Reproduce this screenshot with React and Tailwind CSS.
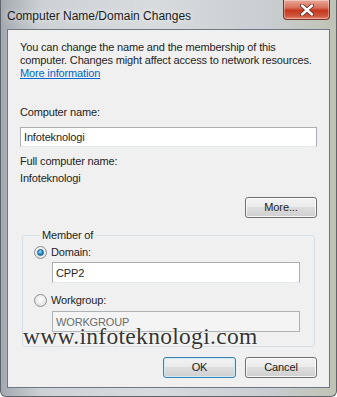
import { useState } from 'react'

const ui = { fontFamily: '"Liberation Sans", Arial, sans-serif' }

function WinButton({ label, primary = false, className = '' }) {
  return (
    <button
      className={`h-[21px] rounded-[3px] border text-[11px] tracking-[-0.1px] text-[#1a1a1a] ${primary
          ? 'border-[#3c7fb1] shadow-[inset_0_0_0_1px_#cdeaf8]'
          : 'border-[#707070] shadow-[inset_0_0_0_1px_rgba(255,255,255,0.8)]'
        } bg-[linear-gradient(180deg,#f2f2f2_0%,#ebebeb_45%,#dddddd_50%,#cfcfcf_100%)] ${className}`}
    >
      {label}
    </button>
  )
}

function Radio({ checked }) {
  return (
    <span className="w-[13px] h-[13px] rounded-full border border-[#8e8f8f] bg-[radial-gradient(circle_at_50%_40%,#ffffff,#d8d8d8)] flex items-center justify-center shrink-0">
      {checked && (
        <span className="w-[7px] h-[7px] rounded-full bg-[radial-gradient(circle_at_40%_35%,#9fe0ff,#1f8bc4_55%,#0f4f82)] border border-[#1b5a8a]" />
      )}
    </span>
  )
}

export default function App() {
  const [name, setName] = useState('Infoteknologi')
  const [member, setMember] = useState('domain')

  return (
    <div
      className="w-[337px] h-[397px] flex flex-col overflow-hidden border-x border-b border-[#5d646b] rounded-b-[6px] bg-[linear-gradient(90deg,#a3a9af_0%,#cdd1d5_12%,#d8dbde_45%,#c9cdd1_80%,#bfc3b4_100%)]"
      style={ui}
    >
      {/* Title bar */}
      <div className="h-[29px] flex items-start shrink-0">
        <span className="pl-[6px] pt-[7px] text-[12px] text-[#1c1c1c] [text-shadow:0_0_6px_rgba(255,255,255,0.9)]">
          Computer Name/Domain Changes
        </span>
        <div className="ml-auto mr-[6px] w-[47px] h-[20px] rounded-b-[4px] border border-t-0 border-[#7b3328] bg-[linear-gradient(180deg,#e9a999_0%,#d8715c_40%,#c5381f_55%,#d0563f_85%,#e28a70_100%)] flex items-center justify-center shadow-[inset_0_0_0_1px_rgba(255,255,255,0.35)]">
          <svg width="14" height="12" viewBox="0 0 14 12">
            <path d="M2 1.5 L12 10.5 M12 1.5 L2 10.5" stroke="#5a2a22" strokeWidth="4" strokeLinecap="round" />
            <path d="M2 1.5 L12 10.5 M12 1.5 L2 10.5" stroke="#ffffff" strokeWidth="2.4" strokeLinecap="round" />
          </svg>
        </div>
      </div>

      {/* Client area */}
      <div className="relative mx-[6px] flex-1 border border-[#6e7883] bg-[#f0f0f0] px-[12px] pt-[11px] text-[11px] tracking-[-0.15px] leading-[13px] text-[#1e1e1e]">
        <p>
          You can change the name and the membership of this computer. Changes might affect access to network resources.
        </p>
        <a href="#" className="text-[#0066cc] underline">More information</a>

        <div className="mt-[26px]">Computer name:</div>
        <input
          value={name}
          onChange={(e) => setName(e.target.value)}
          className="mt-[8px] w-full h-[20px] border border-[#abadb3] border-b-[#e3e9ef] bg-white px-[3px] text-[11px] outline-none"
          style={ui}
        />

        <div className="mt-[8px]">Full computer name:</div>
        <div className="mt-[4px]">Infoteknologi</div>

        <div className="mt-[12px] flex justify-end">
          <WinButton label="More..." className="w-[72px] h-[20px]" />
        </div>

        <fieldset className="mt-[11px] mx-[2px] border border-[#d5dfe5] rounded-[3px] pl-[11px] pr-[14px] pb-[14px] pt-[4px]">
          <legend className="ml-[6px] px-[2px]">Member of</legend>

          <label className="flex items-center gap-[4px]" onClick={() => setMember('domain')}>
            <Radio checked={member === 'domain'} />
            <span>Domain:</span>
          </label>
          <input
            defaultValue="CPP2"
            className="mt-[3px] ml-[18px] w-[calc(100%-18px)] h-[21px] border border-[#abadb3] border-b-[#e3e9ef] bg-white px-[3px] text-[11px] outline-none"
            style={ui}
          />

          <label className="mt-[11px] flex items-center gap-[4px]" onClick={() => setMember('workgroup')}>
            <Radio checked={member === 'workgroup'} />
            <span>Workgroup:</span>
          </label>
          <input
            defaultValue="WORKGROUP"
            disabled
            className="mt-[4px] ml-[18px] w-[calc(100%-18px)] h-[21px] border border-[#adb2b5] bg-[#f4f4f4] px-[3px] text-[11px] text-[#6d6d6d] outline-none"
            style={ui}
          />
        </fieldset>

        <div className="mt-[10px] flex justify-end gap-[9px]">
          <WinButton label="OK" primary className="w-[73px]" />
          <WinButton label="Cancel" className="w-[72px]" />
        </div>

        {/* Watermark */}
        <div
          className="absolute left-[15px] top-[295px] text-[23.5px] leading-none text-[#353535] tracking-[0.3px] [text-shadow:0_0_2px_#ffffff,0_0_2px_#ffffff]"
          style={{ fontFamily: '"Liberation Serif", "Times New Roman", serif' }}
        >
          www.infoteknologi.com
        </div>
      </div>
      <div className="h-[8px] shrink-0" />
    </div>
  )
}
